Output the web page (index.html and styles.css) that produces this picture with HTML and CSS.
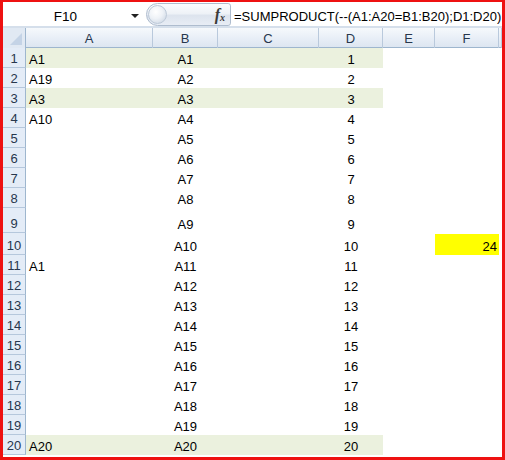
FILE: index.html
```html
<!DOCTYPE html>
<html>
<head>
<meta charset="utf-8">
<link rel="stylesheet" href="styles.css">
</head>
<body>
<div class="frame">
  <div class="fbar">
    <div class="namebox"><span class="name">F10</span><span class="arrow"></span></div>
    <div class="pill"><span class="knob"></span><span class="fx">f<sub>x</sub></span></div>
    <div class="formula">=SUMPRODUCT(--(A1:A20=B1:B20);D1:D20)</div>
  </div>
  <div class="sheet">
    <div class="row hdr"><div class="corner"><span class="tri"></span></div><div class="ch">A</div><div class="ch">B</div><div class="ch">C</div><div class="ch">D</div><div class="ch">E</div><div class="ch">F</div><div class="ch last"></div></div>
    <div class="row green"><div class="rh">1</div><div class="c a">A1</div><div class="c b">A1</div><div class="c">&nbsp;</div><div class="c d">1</div><div class="c e"></div><div class="c"></div><div class="c"></div></div>
    <div class="row"><div class="rh">2</div><div class="c a">A19</div><div class="c b">A2</div><div class="c"></div><div class="c d">2</div><div class="c e"></div><div class="c"></div><div class="c"></div></div>
    <div class="row green"><div class="rh">3</div><div class="c a">A3</div><div class="c b">A3</div><div class="c"></div><div class="c d">3</div><div class="c e"></div><div class="c"></div><div class="c"></div></div>
    <div class="row"><div class="rh">4</div><div class="c a">A10</div><div class="c b">A4</div><div class="c"></div><div class="c d">4</div><div class="c e"></div><div class="c"></div><div class="c"></div></div>
    <div class="row"><div class="rh">5</div><div class="c a"></div><div class="c b">A5</div><div class="c"></div><div class="c d">5</div><div class="c e"></div><div class="c"></div><div class="c"></div></div>
    <div class="row"><div class="rh">6</div><div class="c a"></div><div class="c b">A6</div><div class="c"></div><div class="c d">6</div><div class="c e"></div><div class="c"></div><div class="c"></div></div>
    <div class="row"><div class="rh">7</div><div class="c a"></div><div class="c b">A7</div><div class="c"></div><div class="c d">7</div><div class="c e"></div><div class="c"></div><div class="c"></div></div>
    <div class="row"><div class="rh">8</div><div class="c a"></div><div class="c b">A8</div><div class="c"></div><div class="c d">8</div><div class="c e"></div><div class="c"></div><div class="c"></div></div>
    <div class="row tall9"><div class="rh">9</div><div class="c a"></div><div class="c b">A9</div><div class="c"></div><div class="c d">9</div><div class="c e"></div><div class="c"></div><div class="c"></div></div>
    <div class="row tall10"><div class="rh">10</div><div class="c a"></div><div class="c b">A10</div><div class="c"></div><div class="c d">10</div><div class="c e"></div><div class="c sel">24</div><div class="c"></div></div>
    <div class="row"><div class="rh">11</div><div class="c a">A1</div><div class="c b">A11</div><div class="c"></div><div class="c d">11</div><div class="c e"></div><div class="c"></div><div class="c"></div></div>
    <div class="row"><div class="rh">12</div><div class="c a"></div><div class="c b">A12</div><div class="c"></div><div class="c d">12</div><div class="c e"></div><div class="c"></div><div class="c"></div></div>
    <div class="row"><div class="rh">13</div><div class="c a"></div><div class="c b">A13</div><div class="c"></div><div class="c d">13</div><div class="c e"></div><div class="c"></div><div class="c"></div></div>
    <div class="row"><div class="rh">14</div><div class="c a"></div><div class="c b">A14</div><div class="c"></div><div class="c d">14</div><div class="c e"></div><div class="c"></div><div class="c"></div></div>
    <div class="row"><div class="rh">15</div><div class="c a"></div><div class="c b">A15</div><div class="c"></div><div class="c d">15</div><div class="c e"></div><div class="c"></div><div class="c"></div></div>
    <div class="row"><div class="rh">16</div><div class="c a"></div><div class="c b">A16</div><div class="c"></div><div class="c d">16</div><div class="c e"></div><div class="c"></div><div class="c"></div></div>
    <div class="row"><div class="rh">17</div><div class="c a"></div><div class="c b">A17</div><div class="c"></div><div class="c d">17</div><div class="c e"></div><div class="c"></div><div class="c"></div></div>
    <div class="row"><div class="rh">18</div><div class="c a"></div><div class="c b">A18</div><div class="c"></div><div class="c d">18</div><div class="c e"></div><div class="c"></div><div class="c"></div></div>
    <div class="row"><div class="rh">19</div><div class="c a"></div><div class="c b">A19</div><div class="c"></div><div class="c d">19</div><div class="c e"></div><div class="c"></div><div class="c"></div></div>
    <div class="row green"><div class="rh">20</div><div class="c a">A20</div><div class="c b">A20</div><div class="c"></div><div class="c d">20</div><div class="c e"></div><div class="c"></div><div class="c"></div></div>
  </div>
</div>
</body>
</html>
```

FILE: styles.css
```css
* { box-sizing: border-box; }
html, body { margin: 0; padding: 0; background: #fff; }
body {
  width: 505px;
  height: 460px;
  overflow: hidden;
  font-family: "Liberation Sans", Arial, sans-serif;
  font-size: 13px;
  color: #000;
}
.frame {
  width: 505px;
  height: 460px;
  border-style: solid;
  border-color: #ee1111;
  border-width: 2px 3px 3px 3px;
  overflow: hidden;
  display: flex;
  flex-direction: column;
}
.fbar {
  height: 26px;
  display: flex;
  align-items: center;
  background: #fff;
  border-bottom: 2px solid #d5dfeb;
  flex: none;
}
.namebox {
  width: 142px;
  height: 100%;
  display: flex;
  align-items: center;
}
.name {
  width: 125px;
  text-align: center;
  font-size: 13.5px;
  padding-top: 4px;
}
.arrow {
  width: 0;
  height: 0;
  border-left: 4px solid transparent;
  border-right: 4px solid transparent;
  border-top: 4px solid #222;
  margin-left: 3px;
  margin-top: 4px;
}
.pill {
  width: 85px;
  height: 23px;
  margin-left: 1px;
  margin-top: 1px;
  border: 1px solid #aebcce;
  border-radius: 12px 3px 3px 12px;
  background: linear-gradient(#fbfcfe 0%, #eef2f7 45%, #dde4ee 55%, #e8edf5 100%);
  display: flex;
  align-items: center;
  justify-content: space-between;
  padding: 0 5px 0 1px;
}
.knob {
  width: 19px;
  height: 19px;
  border-radius: 50%;
  background: radial-gradient(circle at 40% 35%, #ffffff 0%, #eef2f7 45%, #c5d0df 100%);
  border: 1px solid #bdc9d8;
}
.fx {
  font-family: "Liberation Serif", "Times New Roman", serif;
  font-style: italic;
  font-weight: bold;
  font-size: 16px;
  color: #3a3a3a;
  line-height: 1;
  padding-top: 1px;
}
.fx sub { font-size: 10px; vertical-align: -1px; }
.formula {
  flex: 1;
  padding-left: 3px;
  white-space: nowrap;
  font-size: 13px;
  padding-top: 4px;
}
.sheet { flex: 1; display: flex; flex-direction: column; }
.row {
  display: grid;
  grid-template-columns: 23px 127px 65px 101px 64px 52px 64px 1fr;
  height: 20px;
  flex: none;
}
.row.tall9 { height: 25px; }
.row.tall10 { height: 22px; }
.hdr {
  height: 20px;
  background: linear-gradient(#f6f9fc 0%, #e9eff7 50%, #dde6f1 100%);
  border-bottom: 1px solid #9eb6ce;
}
.corner {
  background: #e1e9f3;
  border-right: 1px solid #9eb6ce;
  position: relative;
}
.tri {
  position: absolute;
  right: 3px;
  bottom: 3px;
  width: 0;
  height: 0;
  border-left: 12px solid transparent;
  border-bottom: 12px solid #c4d3e6;
}
.ch {
  border-right: 1px solid #b9c9dc;
  text-align: center;
  line-height: 19px;
  padding-top: 1px;
  color: #27374d;
  font-size: 13px;
}
.rh {
  background: #e4ecf7;
  border-right: 1px solid #9eb6ce;
  border-bottom: 1px solid #b5c7dc;
  color: #27374d;
  display: flex;
  align-items: flex-end;
  justify-content: center;
  padding-bottom: 0;
  font-size: 13px;
  line-height: 16px;
}
.c {
  display: flex;
  align-items: flex-end;
  padding: 0 3px 0 3px;
  line-height: 16px;
  white-space: nowrap;
}
.c.b, .c.d { justify-content: center; padding-left: 0; padding-right: 0; }
.green .c.a, .green .c.b, .green .c:nth-child(4), .green .c.d { background: #ebf1de; }
.c.sel {
  background: #ffff00;
  justify-content: flex-end;
  padding-right: 2px;
  margin: 1px 0 0 0;
}
```
